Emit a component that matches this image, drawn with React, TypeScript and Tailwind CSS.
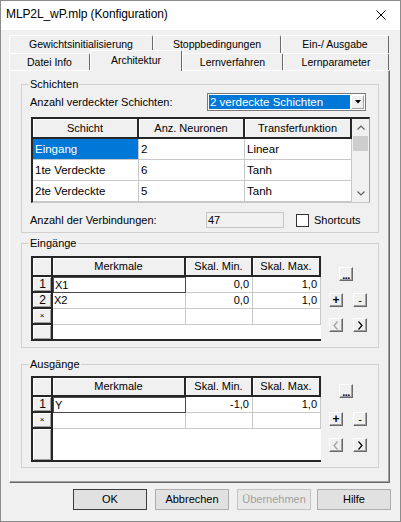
import React from "react";

const hdr =
  "h-[19px] bg-[#f0f0f0] border-r-2 border-b-2 border-[#262626] shadow-[inset_1px_1px_0_#fff] flex items-center justify-center";
const rhCell =
  "h-[16px] bg-[#f0f0f0] border-r-2 border-b-2 border-[#262626] shadow-[inset_1px_1px_0_#fff,inset_-1px_-1px_0_#a0a0a0] flex items-center justify-center";
const dataCell = "h-[16px] border-r border-b border-[#c8c8c8] flex items-center";

function Tab({ w, children }: { w: string; children: React.ReactNode }) {
  return (
    <div
      className={`${w} h-full shrink-0 flex items-center justify-center rounded-t-[2px] border-t border-l border-r border-t-white border-l-white border-r-[#696969] text-[10.5px]`}
    >
      {children}
    </div>
  );
}

function SmallBtn({ children, cls = "" }: { children: React.ReactNode; cls?: string }) {
  return (
    <div
      className={`w-[14px] h-[14px] shrink-0 bg-[#f0f0f0] border border-t-white border-l-white border-r-[#696969] border-b-[#696969] shadow-[inset_-1px_-1px_0_#a0a0a0] flex items-center justify-center ${cls}`}
    >
      {children}
    </div>
  );
}

function Chev({ dir, color }: { dir: "l" | "r"; color: string }) {
  return (
    <svg width="6" height="9" viewBox="0 0 6 9">
      <polyline
        points={dir === "l" ? "4.5,0.5 1,4.5 4.5,8.5" : "1.5,0.5 5,4.5 1.5,8.5"}
        fill="none"
        stroke={color}
        strokeWidth="1.2"
      />
    </svg>
  );
}

function SideButtons({ a, b, c }: { a: string; b: string; c: string }) {
  return (
    <div className="ml-[8px] flex flex-col">
      <div className={`${a} ml-[10px]`}>
        <SmallBtn cls="items-end">
          <span className="font-bold text-[11px] leading-[9px] tracking-[-0.5px]">...</span>
        </SmallBtn>
      </div>
      <div className={`${b} flex gap-[10px]`}>
        <SmallBtn>
          <span className="font-bold text-[12px] leading-none">+</span>
        </SmallBtn>
        <SmallBtn>
          <span className="text-[11px] leading-none">-</span>
        </SmallBtn>
      </div>
      <div className={`${c} flex gap-[10px]`}>
        <SmallBtn>
          <Chev dir="l" color="#a0a0a0" />
        </SmallBtn>
        <SmallBtn>
          <Chev dir="r" color="#000" />
        </SmallBtn>
      </div>
    </div>
  );
}

type Row = { head: string; name: string; min: string; max: string; focus?: boolean };

function FeatureGrid({ rows, emptyH }: { rows: Row[]; emptyH: string }) {
  return (
    <div className="w-[290px] shrink-0 border-t-2 border-l-2 border-b-2 border-[#262626] bg-white">
      <div className="grid grid-cols-[20px_133px_67px_68px]">
        <div className={hdr} />
        <div className={hdr}>Merkmale</div>
        <div className={hdr}>Skal. Min.</div>
        <div className={hdr}>Skal. Max.</div>
        {rows.map((r) => (
          <React.Fragment key={r.head}>
            <div className={`${rhCell} text-[12px] pl-[1px]`}>{r.head}</div>
            <div
              className={
                r.focus
                  ? "h-[16px] border border-[#4a4a4a] flex items-center pl-[1px]"
                  : `${dataCell} pl-[1px]`
              }
            >
              {r.name}
            </div>
            <div className={`${dataCell} justify-end pr-[3px]`}>{r.min}</div>
            <div className={`${dataCell} justify-end pr-[3px]`}>{r.max}</div>
          </React.Fragment>
        ))}
        <div className={rhCell}>
          <span className="text-[8px] leading-none">×</span>
        </div>
        <div className={dataCell} />
        <div className={dataCell} />
        <div className={dataCell} />
        <div
          className={`${emptyH} bg-[#f0f0f0] border-r-2 border-[#262626] shadow-[inset_1px_1px_0_#fff,inset_-1px_-1px_0_#a0a0a0]`}
        />
        <div className={`${emptyH} col-span-3 bg-white`} />
      </div>
    </div>
  );
}

function SchichtenGrid() {
  const rows = [
    ["Eingang", "2", "Linear"],
    ["1te Verdeckte", "6", "Tanh"],
    ["2te Verdeckte", "5", "Tanh"],
  ];
  const h = "h-[20px] bg-[#f0f0f0] border-r-2 border-b-2 border-[#262626] shadow-[inset_1px_1px_0_#fff] flex items-center justify-center";
  const c = "h-[21px] border-r border-b border-[#c8c8c8] flex items-center pl-[2px] text-[11.5px]";
  return (
    <div className="mt-[6px] flex h-[86px] border-t-2 border-l-2 border-t-[#262626] border-l-[#262626] border-r border-b border-r-[#a0a0a0] border-b-[#c8c8c8] bg-white">
      <div className="grid grid-cols-[106px_106px_107px] content-start h-[83px] overflow-hidden">
        <div className={h}>Schicht</div>
        <div className={h}>Anz. Neuronen</div>
        <div className={h}>Transferfunktion</div>
        {rows.map((r, i) => (
          <React.Fragment key={r[0]}>
            <div className={`${c} ${i === 0 ? "bg-[#0078d7] text-white" : ""}`}>{r[0]}</div>
            <div className={c}>{r[1]}</div>
            <div className={c}>{r[2]}</div>
          </React.Fragment>
        ))}
      </div>
      <div className="w-[17px] h-[83px] bg-[#f0f0f0] flex flex-col">
        <div className="h-[17px] flex items-center justify-center">
          <svg width="8" height="5" viewBox="0 0 8 5">
            <polyline points="0.5,4.5 4,1 7.5,4.5" fill="none" stroke="#606060" strokeWidth="1.2" />
          </svg>
        </div>
        <div className="mx-[1px] h-[15px] bg-[#cdcdcd]" />
        <div className="flex-1" />
        <div className="h-[17px] flex items-center justify-center">
          <svg width="8" height="5" viewBox="0 0 8 5">
            <polyline points="0.5,0.5 4,4 7.5,0.5" fill="none" stroke="#606060" strokeWidth="1.2" />
          </svg>
        </div>
      </div>
    </div>
  );
}

function DlgBtn({ children, cls }: { children: React.ReactNode; cls: string }) {
  return (
    <div className={`w-[74px] h-[21px] shrink-0 flex items-center justify-center ${cls}`}>{children}</div>
  );
}

export default function App() {
  return (
    <div className="w-[401px] h-[522px] bg-[#f0f0f0] border border-[#8c8c8c] font-['Liberation_Sans',Arial,sans-serif] text-[11px] leading-[13px] text-black overflow-hidden">
      <div className="h-[29px] bg-white flex items-start justify-between pl-[5px] pr-[14px] pt-[6px]">
        <span className="text-[12px] leading-[14px] tracking-[-0.1px]">MLP2L_wP.mlp (Konfiguration)</span>
        <svg width="10" height="10" viewBox="0 0 10 10" className="mt-[3px]">
          <path d="M0.5 0.5 L9.5 9.5 M9.5 0.5 L0.5 9.5" stroke="#000" strokeWidth="1" />
        </svg>
      </div>
      <div className="pt-[5px] pl-[8px]">
        <div className="flex h-[18px]">
          <Tab w="w-[144px]">Gewichtsinitialisierung</Tab>
          <Tab w="w-[128px]">Stoppbedingungen</Tab>
          <Tab w="w-[108px]">Ein-/ Ausgabe</Tab>
        </div>
        <div className="flex h-[17px] items-end relative z-10">
          <Tab w="w-[81px]">Datei Info</Tab>
          <div className="w-[92px] h-[21px] shrink-0 relative top-[1px] bg-[#f0f0f0] rounded-t-[2px] border-t border-l border-r border-t-white border-l-white border-r-[#696969] flex items-center justify-center pb-[2px] text-[10.5px]">
            Architektur
          </div>
          <Tab w="w-[101px]">Lernverfahren</Tab>
          <Tab w="w-[106px]">Lernparameter</Tab>
        </div>
        <div className="w-[381px] h-[413px] border-t border-l border-r border-b border-t-white border-l-white border-r-[#696969] border-b-[#696969] shadow-[inset_-1px_-1px_0_#a0a0a0] pt-[7px] pl-[11px]">
          <fieldset className="w-[358px] border border-[#d0d0d0] pl-[9px] pr-[8px] pt-[2px] pb-[4px]">
            <legend className="-ml-[2px] px-[1px]">Schichten</legend>
            <div className="flex items-center h-[18px]">
              <div className="w-[177px] -ml-[1px]">Anzahl verdeckter Schichten:</div>
              <div className="w-[159px] h-[18px] border border-[#7a7a7a] bg-white p-[1px] flex">
                <div className="flex-1 bg-[#0078d7] text-white flex items-center pl-[1px] text-[11.5px]">
                  2 verdeckte Schichten
                </div>
                <div className="w-[13px] ml-[1px] bg-[#f0f0f0] border border-t-white border-l-white border-r-[#a0a0a0] border-b-[#a0a0a0] flex items-center justify-center">
                  <svg width="6" height="4" viewBox="0 0 6 4">
                    <polygon points="0,0 6,0 3,3.5" fill="#000" />
                  </svg>
                </div>
              </div>
            </div>
            <SchichtenGrid />
            <div className="mt-[9px] flex items-center h-[16px]">
              <div className="w-[176px] -ml-[1px]">Anzahl der Verbindungen:</div>
              <div className="w-[78px] h-[16px] bg-[#f0f0f0] border border-[#c4c4c4] flex items-center pl-[1px]">
                47
              </div>
              <div className="ml-[12px] w-[13px] h-[13px] bg-white border border-[#333]" />
              <div className="ml-[5px]">Shortcuts</div>
            </div>
          </fieldset>

          <fieldset className="mt-[4px] w-[358px] border border-[#d0d0d0] pl-[9px] pt-[6px] pb-[6px]">
            <legend className="-ml-[2px] px-[1px]">Eingänge</legend>
            <div className="flex">
              <FeatureGrid
                rows={[
                  { head: "1", name: "X1", min: "0,0", max: "1,0", focus: true },
                  { head: "2", name: "X2", min: "0,0", max: "1,0" },
                ]}
                emptyH="h-[14px]"
              />
              <SideButtons a="mt-[11px]" b="mt-[12px]" c="mt-[11px]" />
            </div>
          </fieldset>

          <fieldset className="mt-[10px] w-[358px] border border-[#d0d0d0] pl-[9px] pt-[5px] pb-[5px]">
            <legend className="-ml-[2px] px-[1px]">Ausgänge</legend>
            <div className="flex">
              <FeatureGrid
                rows={[{ head: "1", name: "Y", min: "-1,0", max: "1,0", focus: true }]}
                emptyH="h-[31px]"
              />
              <SideButtons a="mt-[8px]" b="mt-[14px]" c="mt-[12px]" />
            </div>
          </fieldset>
        </div>
        <div className="mt-[6px] flex">
          <DlgBtn cls="ml-[64px] bg-[#e1e1e1] border border-[#3c3c3c]">OK</DlgBtn>
          <DlgBtn cls="ml-[8px] bg-[#e1e1e1] border border-[#adadad]">Abbrechen</DlgBtn>
          <DlgBtn cls="ml-[8px] bg-[#e8e8e8] border border-[#c4c4c4] text-[#a0a0a0]">Übernehmen</DlgBtn>
          <DlgBtn cls="ml-[6px] bg-[#e1e1e1] border border-[#adadad]">Hilfe</DlgBtn>
        </div>
      </div>
    </div>
  );
}
